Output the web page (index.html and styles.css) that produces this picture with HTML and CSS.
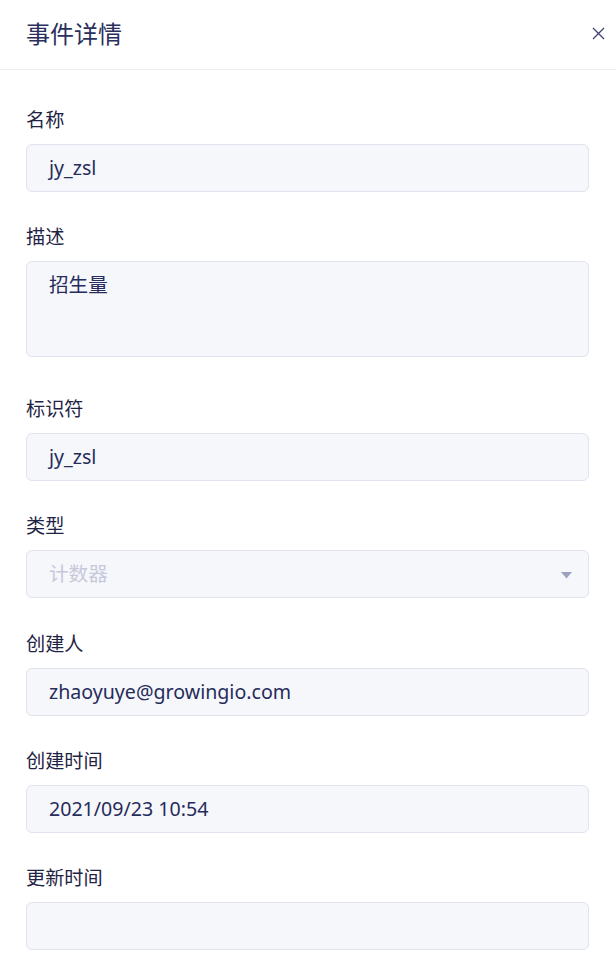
FILE: index.html
```html
<!DOCTYPE html>
<html lang="zh">
<head>
<meta charset="utf-8">
<link rel="stylesheet" href="styles.css">
</head>
<body>
<div class="drawer">
  <div class="header">
    <div class="title">事件详情</div>
    <svg class="close" width="13" height="13" viewBox="0 0 13 13"><path d="M1 1L12 12M12 1L1 12" stroke="#3d4270" stroke-width="1.3" fill="none"/></svg>
  </div>
  <div class="body">
    <div class="field">
      <div class="label">名称</div>
      <div class="input">jy_zsl</div>
    </div>
    <div class="field field-tall">
      <div class="label">描述</div>
      <div class="input textarea">招生量</div>
    </div>
    <div class="field">
      <div class="label">标识符</div>
      <div class="input">jy_zsl</div>
    </div>
    <div class="field">
      <div class="label">类型</div>
      <div class="input select disabled">计数器
        <svg class="arrow" width="11" height="7" viewBox="0 0 11 7"><path d="M0 0H11L5.5 6.5Z" fill="#9da1c0"/></svg>
      </div>
    </div>
    <div class="field">
      <div class="label">创建人</div>
      <div class="input">zhaoyuye@growingio.com</div>
    </div>
    <div class="field">
      <div class="label">创建时间</div>
      <div class="input">2021/09/23 10:54</div>
    </div>
    <div class="field">
      <div class="label">更新时间</div>
      <div class="input"></div>
    </div>
  </div>
</div>
</body>
</html>
```
FILE: styles.css
```css
* { box-sizing: border-box; }
html, body { margin: 0; padding: 0; background: #fff; }
body {
  font-family: "Noto Sans", "Noto Sans CJK SC", sans-serif;
  color: #242a58;
}
.drawer { width: 616px; }
.header {
  height: 70px;
  border-bottom: 1px solid #eceef3;
  display: flex;
  align-items: center;
  justify-content: space-between;
  padding: 0 11px 2px 26px;
}
.title {
  font-size: 24px;
  line-height: 32px;
  color: #2a2f5e;
}
.close { display: block; }
.body { padding: 38px 27px 0 26px; }
.field { padding-bottom: 33.4px; }
.field-tall { padding-bottom: 39.4px; }
.label {
  font-size: 19.2px;
  line-height: 24px;
  margin-bottom: 12px;
  color: #1f2444;
}
.input {
  height: 48px;
  border: 1px solid #e0e2ee;
  background: #f6f7fb;
  border-radius: 6px;
  padding: 0 22px;
  font-size: 19.6px;
  line-height: 46px;
  color: #262c5c;
  position: relative;
}
.textarea {
  height: 96px;
  line-height: 24px;
  padding-top: 11px;
}
.disabled { color: #c6c9da; }
.arrow {
  position: absolute;
  right: 16px;
  top: 21px;
}
```
